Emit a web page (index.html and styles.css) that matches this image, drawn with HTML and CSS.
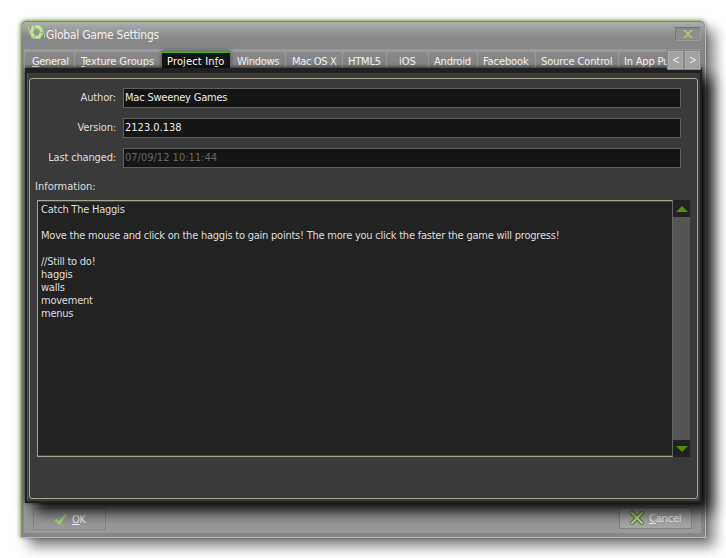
FILE: index.html
```html
<!DOCTYPE html>
<html lang="en">
<head>
<meta charset="utf-8">
<title>Global Game Settings</title>
<link rel="stylesheet" href="styles.css">
</head>
<body>
<div class="window">
  <header class="titlebar">
    <svg class="logo" width="17" height="16" viewBox="0 0 17 16"><path d="M5.500 1.800h5.500l3 5-3 5.400H6L3 7.500z" fill="none" stroke="#bfe596" stroke-width="3.200"/><path d="M.5 1v4l3 4M16.500 13V9l-3-4M3 13l2-2M12 1l2 2" fill="none" stroke="#a9d77c"/><path d="M6 0l1 4M16 7l-4 1M6 15l1-4" stroke="#8c9a7e" stroke-width=".7"/></svg>
    <h1>Global Game Settings</h1>
    <button class="close" aria-label="Close"><svg width="12" height="8" viewBox="0 0 12 8"><path d="M1 .5h2l3 2.500 3-2.500h2M1 7.500h2l3-2.500 3 2.500h2M3 1l6 6M9 1L3 7" fill="none" stroke="#a6ca80" stroke-width="1.200"/></svg></button>
  </header>
  <nav class="tabs">
    <a class="tab general"><span><u>G</u>eneral</span></a>
    <a class="tab texture"><span><u>T</u>exture Groups</span></a>
    <a class="tab project"><span>Project In<u>f</u>o</span></a>
    <a class="tab windows"><span>Windows</span></a>
    <a class="tab mac"><span>Mac OS X</span></a>
    <a class="tab html"><span>HTML5</span></a>
    <a class="tab ios"><span>iOS</span></a>
    <a class="tab android"><span>Android</span></a>
    <a class="tab facebook"><span>Facebook</span></a>
    <a class="tab source"><span>Source Control</span></a>
    <a class="tab purchases"><span>In App Pu</span></a>
    <button class="scroll-tab"><svg width="8" height="8" viewBox="0 0 8 8"><path d="M7 1L1.500 4 7 7"/></svg></button>
    <button class="scroll-tab"><svg width="8" height="8" viewBox="0 0 8 8"><path d="M1 1l5.500 3L1 7"/></svg></button>
  </nav>
  <main class="panel">
    <section class="frame">
      <div class="row"><label class="author">Author:</label><div class="field author-value"><span>Mac Sweeney Games</span></div></div>
      <div class="row"><label class="version">Version:</label><div class="field version-value"><span>2123.0.138</span></div></div>
      <div class="row"><label class="changed">Last changed:</label><div class="field changed-value"><span>07/09/12 10:11:44</span></div></div>
      <div class="info-label"><span>Information:</span></div>
      <div class="editor">
        <div class="notes"><p>Catch The Haggis</p><p></p><p>Move the mouse and click on the haggis to gain points! The more you click the faster the game will progress!</p><p></p><p>//Still to do!</p><p>haggis</p><p>walls</p><p>movement</p><p>menus</p></div>
        <div class="scrollbar">
          <div class="arrow"><svg width="12" height="6" viewBox="0 0 12 6"><path d="M0 6L6 0l6 6z"/></svg></div>
          <div class="arrow"><svg width="12" height="6" viewBox="0 0 12 6"><path d="M0 0h12L6 6z"/></svg></div>
        </div>
      </div>
    </section>
  </main>
  <footer class="footer">
    <button class="action ok"><svg width="13" height="13" viewBox="0 0 13 13"><path d="M0 7l3-1 2 2 7-8 1 1-7 11z" fill="#a5dc6c"/></svg><span><u>O</u>K</span></button>
    <button class="action cancel"><svg width="14" height="14" viewBox="0 0 14 14"><path d="M2 2l10 10M12 2L2 12" stroke="#5f6f4d" stroke-width="4" stroke-linecap="round"/><path d="M1.800 1.800l10.400 10.400M12.200 1.800L1.800 12.200" stroke="#b2e27f" stroke-width="2.200" stroke-linecap="round"/></svg><span><u>C</u>ancel</span></button>
  </footer>
</div>
</body>
</html>
```
FILE: styles.css
```css
* { box-sizing: border-box; }
body {
  margin: 0;
  width: 726px;
  height: 558px;
  padding: 20px;
  overflow: hidden;
  background: #fff;
  font: 11px/13px "DejaVu Sans Condensed", "DejaVu Sans", sans-serif;
  font-stretch: condensed;
  color: #dedede;
}
h1, p { margin: 0; font-size: 11px; font-weight: normal; }
button { font: inherit; color: inherit; padding: 0; margin: 0; border-radius: 0; }
svg { display: block; flex: none; }
span, h1, p { white-space: pre; }
u { text-underline-offset: 1px; text-decoration-thickness: 1px; }

.window {
  width: 686px;
  height: 518px;
  border: 1px solid #a9c984;
  border-radius: 6px 6px 0 0;
  background: linear-gradient(#b0b0b0, #878787 17px, #878787);
  box-shadow: inset 0 1px #808080, 0 0 4px rgba(0,0,0,.4), 9px 9px 13px rgba(0,0,0,.48);
  padding: 0 4px 4px 3px;
  display: flex;
  flex-direction: column;
}
.titlebar { height: 28px; display: flex; padding: 4px 0 0 4px; }
h1 { font-size: 12px; line-height: 20px; margin-left: 1px; color: #f0f0f0; letter-spacing: -.24px; }
.close {
  margin-left: auto;
  margin-top: 2px;
  width: 26px;
  height: 14px;
  border: 1px solid #747474;
  border-right-color: #9b9b9b;
  border-bottom-color: #9b9b9b;
  background: #8e8e8e;
  display: grid;
  place-items: center;
}
.tabs { display: flex; height: 19px; padding: 3px 1px 0 1px; background: #999; }
.tab {
  display: block;
  flex: none;
  height: 16px;
  border-radius: 3px 3px 0 0;
  margin-right: 1px;
  background: linear-gradient(#878787 12px, #707070);
  padding-top: 3px;
  line-height: 13px;
  color: #f4f4f4;
}
.general { width: 49px; padding-left: 7px; letter-spacing: -.35px; }
.texture { width: 86px; padding-left: 6px; letter-spacing: -.1px; }
.project {
  width: 68px;
  padding: 1px 0 0 5px;
  background: #151515;
  border-top: 2px solid #41ad0f;
  border-radius: 0;
  margin-top: -1px;
  height: 17px;
  line-height: 15px;
  letter-spacing: .15px;
  color: #fff;
  box-shadow: 0 0 4px #333;
  z-index: 1;
}
.windows { width: 54px; padding-left: 6px; letter-spacing: -.3px; }
.mac { width: 56px; padding-left: 6px; letter-spacing: -.35px; }
.html { width: 43px; padding-left: 5px; letter-spacing: -.2px; }
.ios { width: 41px; padding-left: 12px; }
.android { width: 48px; padding-left: 5px; letter-spacing: -.2px; }
.facebook { width: 57px; padding-left: 5px; letter-spacing: -.1px; }
.source { width: 82px; padding-left: 5px; letter-spacing: -.1px; }
.purchases { width: 49px; margin-right: 0; padding-left: 5px; letter-spacing: -.2px; }
.scroll-tab {
  position: relative;
  z-index: 2;
  width: 15px;
  height: 18px;
  margin: -1px 2px 0 0;
  flex: none;
  background: #a2a2a2;
  border: 1px solid #adadad;
  box-shadow: 0 0 0 1px #878787;
  display: grid;
  place-items: center;
}
.scroll-tab svg { fill: none; stroke: #f0f0f0; }
.panel {
  position: relative;
  z-index: 1;
  height: 435px;
  width: 677px;
  margin-left: 1px;
  padding: 2px;
  background: #202020;
  box-shadow: 0 0 4px rgba(0,0,0,.65), 9px 9px 14px rgba(0,0,0,.9);
}
.frame {
  height: 431px;
  padding: 7px 2px 0;
  background: #3a3a3a;
  box-shadow: inset 1px 0 #555;
  display: flex;
  flex-direction: column;
  position: relative;
}
.frame::before {
  content: "";
  position: absolute;
  inset: 8px 2px 2px 2px;
  border: 1px solid #aaa493;
  border-radius: 3px;
}
.frame::after { content: ""; position: absolute; inset: 0 0 auto; height: 3px; background: #202020; }
.row { display: flex; height: 20px; margin: 11px 0 -1px; width: 652px; }
label { width: 87px; text-align: right; line-height: 20px; letter-spacing: -.15px; }
.field {
  width: 558px;
  height: 20px;
  margin-left: auto;
  border: 1px solid #5e5e5e;
  background: #151515;
  padding-left: 1px;
  line-height: 17px;
  color: #eaeaea;
}
.author-value { letter-spacing: -.2px; }
.changed-value { color: #666; }
.info-label { margin: 12px 0 0 6px; line-height: 15px; }
.editor { display: flex; margin: 6px 0 0 8px; height: 257px; width: 653px; }
.notes {
  width: 636px;
  border: 1px solid #aaa493;
  border-right: 1px solid #666;
  box-shadow: inset 0 1px #464646, inset 0 -1px #464646;
  background: #222;
  padding: 2px 0 0 3px;
}
.notes p { height: 13px; letter-spacing: -.23px; }
.scrollbar { width: 17px; display: flex; flex-direction: column; justify-content: space-between; background: #555; }
.arrow { height: 17px; background: #222; display: grid; place-items: center; }
.arrow svg { fill: #51900d; }
.footer { height: 30px; background: #9a9a9a; display: flex; justify-content: space-between; padding: 4px 9px 0; }
.action {
  width: 73px;
  height: 22px;
  border: 1px solid #858585;
  background: #9b9b9b;
  display: flex;
  align-items: center;
  color: #f4f4f4;
}
.ok { padding-left: 20px; gap: 5px; margin-top: 1px; letter-spacing: -.4px; }
.cancel { padding-left: 10px; gap: 5px; background: #a8a8a8; letter-spacing: -.2px; }
```
